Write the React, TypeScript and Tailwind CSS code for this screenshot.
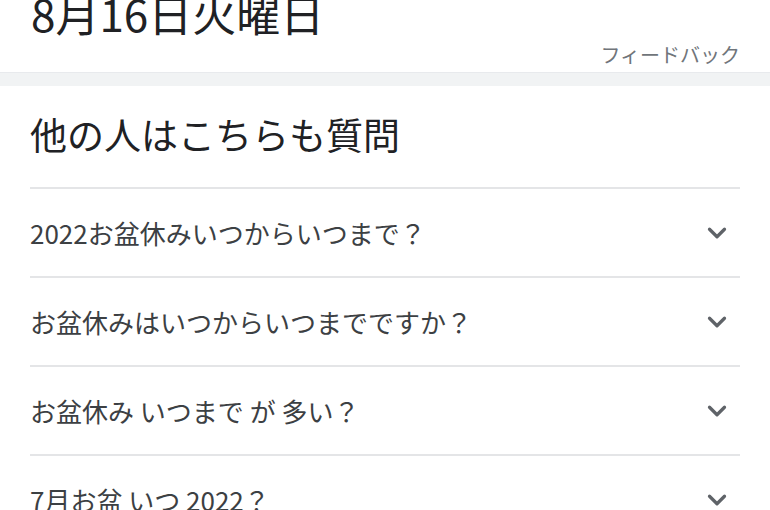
import { ChevronDown } from "lucide-react";

const questions = [
  "2022お盆休みいつからいつまで？",
  "お盆休みはいつからいつまでですか？",
  "お盆休み いつまで が 多い？",
  "7月お盆 いつ 2022？",
];

const App = () => {
  return (
    <div
      className="w-[770px] h-[510px] overflow-hidden bg-white"
      style={{ fontFamily: '"Noto Sans CJK JP", "Noto Sans", sans-serif' }}
    >
      <div className="px-[31px] -mt-[15px] h-[57px] text-[44px] leading-[56px] text-[#202124]">
        8月16日火曜日
      </div>
      <div className="flex justify-end pr-[30px] h-[30px] text-[20px] leading-[26px] text-[#70757a]">
        フィードバック
      </div>
      <div className="h-[14px] bg-[#f1f3f4] border-t border-[#e8eaed]" />
      <div className="px-[30px]">
        <h2 className="h-[101px] pt-[23px] text-[37px] leading-[50px] text-[#202124]">
          他の人はこちらも質問
        </h2>
        {questions.map((q) => (
          <div
            key={q}
            className="flex items-center justify-between h-[89px] border-t-2 border-[#e4e5e7]"
          >
            <span className="text-[26px] text-[#3c4043]">{q}</span>
            <ChevronDown className="w-[30px] h-[30px] mr-[8px] text-[#5f6368]" strokeWidth={2.6} />
          </div>
        ))}
      </div>
    </div>
  );
};

export default App;
